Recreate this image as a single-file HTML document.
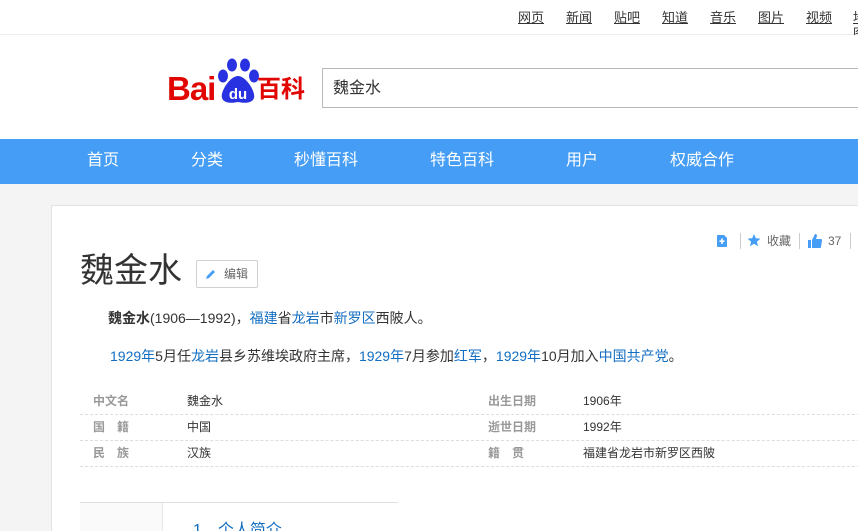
<!DOCTYPE html>
<html><head><meta charset="utf-8"><style>
*{margin:0;padding:0;box-sizing:border-box}
html{width:858px;height:531px;overflow:hidden}
body{width:858px;height:531px;overflow:hidden;background:#f4f4f4;font-family:"Liberation Sans","Noto Sans CJK SC",sans-serif;position:relative;color:#333}
.abs{position:absolute}
#top{left:0;top:0;width:858px;height:35px;background:#fff;border-bottom:1px solid #ececec}
#top a{position:absolute;top:10px;font-size:13px;color:#333;text-decoration:underline;line-height:16px}
#hd{left:0;top:35px;width:858px;height:104px;background:#fff}
#nav{left:0;top:139px;width:858px;height:45px;background:#459df5}
#nav span{position:absolute;top:12px;color:#fff;font-size:16px;line-height:20px}
#card{left:51px;top:205px;width:820px;height:326px;background:#fff;border:1px solid #e3e3e3;border-bottom:none}
.blue{color:#136ec2}
.row{position:absolute;left:80px;width:790px;height:26px;border-bottom:1px dashed #ddd;font-size:12px;line-height:24px}
.row span{position:absolute}
.lb{color:#999;font-weight:bold}
</style></head><body>
<div id="top" class="abs">
<a style="left:518px">网页</a><a style="left:566px">新闻</a><a style="left:614px">贴吧</a><a style="left:662px">知道</a><a style="left:710px">音乐</a><a style="left:758px">图片</a><a style="left:806px">视频</a><a style="left:853px">地图</a>
</div>
<div id="hd" class="abs">
<div class="abs" style="left:167px;top:37px;font-size:33px;font-weight:bold;color:#e10601;letter-spacing:-1px;line-height:34px;font-family:'Liberation Sans',sans-serif">Bai</div>
<svg class="abs" style="left:217px;top:23px" width="42" height="46" viewBox="0 0 42 46">
<ellipse cx="15" cy="7" rx="5" ry="6.5" fill="#2932e1"/><ellipse cx="28" cy="7" rx="5" ry="6.5" fill="#2932e1"/>
<ellipse cx="6" cy="18" rx="5" ry="6.5" fill="#2932e1"/><ellipse cx="37" cy="18" rx="5" ry="6.5" fill="#2932e1"/>
<path d="M21 18 C13 18 3 34 5 40 C7 46 16 45 21 44 C26 45 35 46 37 40 C39 34 29 18 21 18Z" fill="#2932e1"/>
<text x="21" y="41" fill="#fff" font-size="15" font-weight="bold" text-anchor="middle" font-family="Liberation Sans">du</text>
</svg>
<div class="abs" style="left:257px;top:40px;font-size:24px;font-weight:bold;color:#e10601;line-height:30px">百科</div>
<div class="abs" style="left:322px;top:33px;width:560px;height:40px;border:1px solid #b8b8b8;font-size:16px;line-height:40px;padding-left:10px;color:#333">魏金水</div>
</div>
<div id="nav" class="abs">
<span style="left:87px">首页</span><span style="left:191px">分类</span><span style="left:294px">秒懂百科</span><span style="left:430px">特色百科</span><span style="left:566px">用户</span><span style="left:670px">权威合作</span>
</div>
<div id="card" class="abs"></div>
<div class="abs" style="left:80px;top:250px;font-size:34px;line-height:42px;color:#333">魏金水</div>
<div class="abs" style="left:196px;top:260px;width:62px;height:28px;border:1px solid #d0d0d0;border-radius:2px;font-size:12px;color:#666;line-height:26px;padding-left:27px">编辑
<svg class="abs" style="left:8px;top:7px" width="12" height="12" viewBox="0 0 12 12"><path d="M1 11 L2 8 L8 2 L10 4 L4 10Z" fill="#459df5"/></svg></div>
<svg class="abs" style="left:716px;top:234px" width="12" height="14" viewBox="0 0 12 14"><path d="M1 2 Q1 1 2 1 L8 1 L11 4 L11 12 Q11 13 10 13 L2 13 Q1 13 1 12Z" fill="#459df5"/><path d="M6 4.5V10M3.5 7.2H8.5" stroke="#fff" stroke-width="1.6"/></svg>
<div class="abs" style="left:740px;top:233px;width:1px;height:16px;background:#ccc"></div>
<svg class="abs" style="left:747px;top:234px" width="14" height="13" viewBox="0 0 14 13"><path d="M7 0 L8.8 4.3 L13.5 4.6 L9.9 7.6 L11 12.2 L7 9.7 L3 12.2 L4.1 7.6 L0.5 4.6 L5.2 4.3Z" fill="#459df5"/></svg>
<div class="abs" style="left:767px;top:233px;font-size:12px;color:#666;line-height:16px">收藏</div>
<div class="abs" style="left:799px;top:233px;width:1px;height:16px;background:#ccc"></div>
<svg class="abs" style="left:808px;top:233px" width="14" height="15" viewBox="0 0 14 15"><path d="M0 7h3v8H0z M4 7 L7 1 Q9 1 9 3 L8 6 L13 6 Q14 6 14 7.5 L13 14 Q13 15 12 15 L4 15Z" fill="#459df5"/></svg>
<div class="abs" style="left:828px;top:233px;font-size:12px;color:#666;line-height:16px">37</div>
<div class="abs" style="left:850px;top:233px;width:1px;height:16px;background:#ccc"></div>
<div class="abs" style="left:108px;top:308px;font-size:14px;line-height:20px;white-space:nowrap"><b>魏金水</b>(1906—1992)，<span class="blue">福建</span>省<span class="blue">龙岩</span>市<span class="blue">新罗区</span>西陂人。</div>
<div class="abs" style="left:110px;top:346px;font-size:14px;line-height:20px;white-space:nowrap"><span class="blue">1929年</span>5月任<span class="blue">龙岩</span>县乡苏维埃政府主席，<span class="blue">1929年</span>7月参加<span class="blue">红军</span>，<span class="blue">1929年</span>10月加入<span class="blue">中国共产党</span>。</div>
<div class="row" style="top:389px"><span class="lb" style="left:13px">中文名</span><span style="left:107px">魏金水</span><span class="lb" style="left:408px">出生日期</span><span style="left:503px">1906年</span></div>
<div class="row" style="top:415px"><span class="lb" style="left:13px">国　籍</span><span style="left:107px">中国</span><span class="lb" style="left:408px">逝世日期</span><span style="left:503px">1992年</span></div>
<div class="row" style="top:441px"><span class="lb" style="left:13px">民　族</span><span style="left:107px">汉族</span><span class="lb" style="left:408px">籍　贯</span><span style="left:503px">福建省龙岩市新罗区西陂</span></div>
<div class="abs" style="left:80px;top:502px;width:318px;height:1px;background:#e0e0e0"></div>
<div class="abs" style="left:80px;top:503px;width:83px;height:30px;background:#fafafa;border-right:1px solid #e6e6e6"></div>
<div class="abs" style="left:193px;top:521px;font-size:16px;line-height:20px;color:#136ec2">1　个人简介</div>
</body></html>
